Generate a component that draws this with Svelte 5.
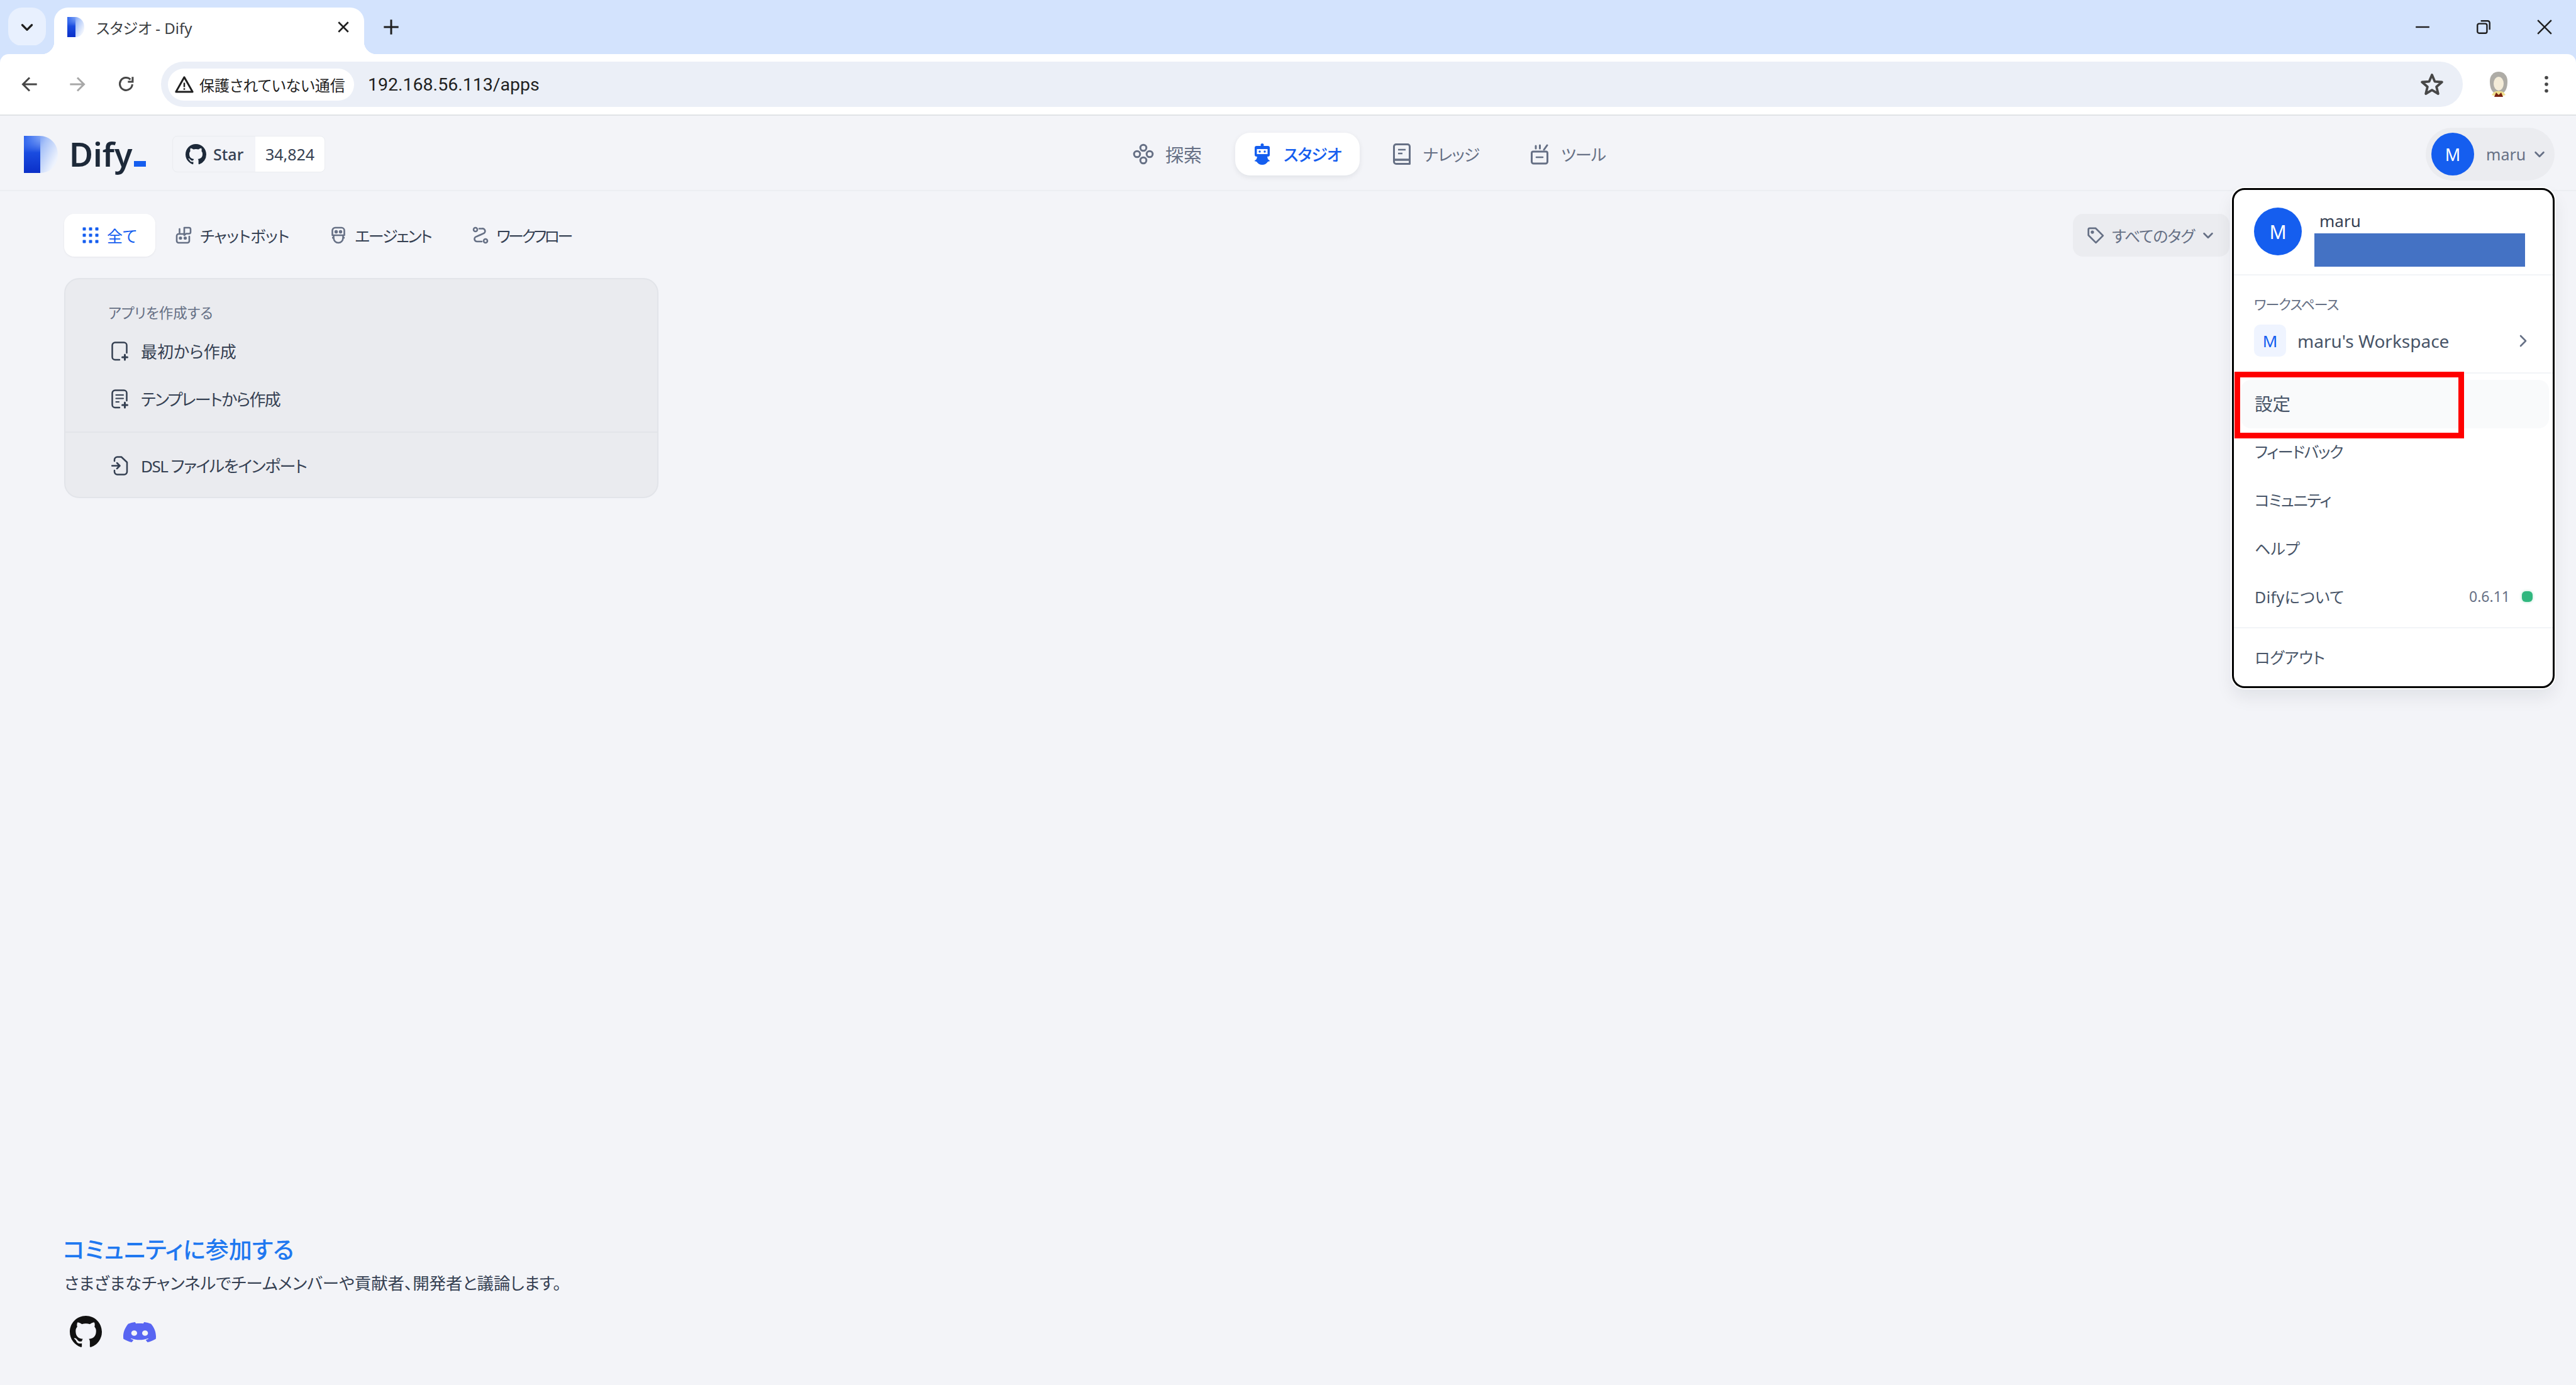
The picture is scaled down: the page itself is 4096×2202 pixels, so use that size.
<script>
  const navItems = [
    { id: 'explore', label: '探索', kanji: true },
    { id: 'studio', label: 'スタジオ', active: true },
    { id: 'knowledge', label: 'ナレッジ' },
    { id: 'tools', label: 'ツール' }
  ];
  const filters = [
    { id: 'all', label: '全て', active: true, track: '0' },
    { id: 'chat', label: 'チャットボット', track: '-0.4px' },
    { id: 'agent', label: 'エージェント', track: '-2.2px' },
    { id: 'workflow', label: 'ワークフロー', track: '-3.5px' }
  ];
  const cardRows = [
    { id: 'blank', label: '最初から作成', track: '0' },
    { id: 'template', label: 'テンプレートから作成', track: '-1.7px' }
  ];
  const menuItems = [
    { label: 'フィードバック', track: '-1.4px' },
    { label: 'コミュニティ', track: '-1.3px' },
    { label: 'ヘルプ', track: '0' },
    { label: 'Difyについて', track: '0.4px', version: '0.6.11' }
  ];
</script>

{#snippet logoMark(id)}
  <svg viewBox="0 0 54 59" preserveAspectRatio="none">
    <defs>
      <linearGradient id="{id}a" x1="0" y1="0" x2="1" y2="0.55">
        <stop offset="0" stop-color="#2a62ee" />
        <stop offset="0.55" stop-color="#a9c3f8" />
        <stop offset="1" stop-color="#eef3fd" />
      </linearGradient>
      <linearGradient id="{id}b" x1="0" y1="0" x2="0" y2="1">
        <stop offset="0" stop-color="#2a62ee" stop-opacity="0" />
        <stop offset="0.45" stop-color="#1a4ce0" />
        <stop offset="1" stop-color="#0a2fc8" />
      </linearGradient>
    </defs>
    <path d="M0 0H24C42 0 54 13 54 30C54 45 44 59 26 59H0Z" fill="url(#{id}a)" />
    <rect width="26" height="59" fill="url(#{id}b)" />
  </svg>
{/snippet}

{#snippet github(size)}
  <svg width={size} height={size} viewBox="0 0 16 16" fill="currentColor">
    <path d="M8 0C3.58 0 0 3.58 0 8c0 3.54 2.29 6.53 5.47 7.59.4.07.55-.17.55-.38 0-.19-.01-.82-.01-1.49-2.01.37-2.53-.49-2.69-.94-.09-.23-.48-.94-.82-1.13-.28-.15-.68-.52-.01-.53.63-.01 1.08.58 1.23.82.72 1.21 1.87.87 2.33.66.07-.52.28-.87.51-1.07-1.78-.2-3.64-.89-3.64-3.95 0-.87.31-1.59.82-2.15-.08-.2-.36-1.02.08-2.12 0 0 .67-.21 2.2.82.64-.18 1.32-.27 2-.27.68 0 1.36.09 2 .27 1.53-1.04 2.2-.82 2.2-.82.44 1.1.16 1.92.08 2.12.51.56.82 1.27.82 2.15 0 3.07-1.87 3.75-3.65 3.95.29.25.54.73.54 1.48 0 1.07-.01 1.93-.01 2.2 0 .21.15.46.55.38A8.013 8.013 0 0016 8c0-4.42-3.58-8-8-8z" />
  </svg>
{/snippet}

{#snippet chevron(size, color)}
  <svg width={size} height={size} viewBox="0 0 24 24" fill="none" stroke={color} stroke-width="3" stroke-linecap="round" stroke-linejoin="round">
    <path d="M5 9l7 7 7-7" />
  </svg>
{/snippet}

{#snippet navIcon(id)}
  {#if id === 'explore'}
    <svg class="nav-icon wide" viewBox="0 0 34 34" fill="none" stroke="#667085" stroke-width="3">
      <circle cx="17" cy="7" r="4.8" /><circle cx="7" cy="17" r="4.8" /><circle cx="27" cy="17" r="4.8" /><circle cx="17" cy="27" r="4.8" />
    </svg>
  {:else if id === 'studio'}
    <svg class="nav-icon" viewBox="0 0 28 34" fill="#155eef">
      <circle cx="14" cy="2.5" r="2.5" />
      <rect x="2" y="4" width="24" height="17" rx="3" />
      <rect x="5.5" y="9" width="17" height="8" fill="#fff" />
      <circle cx="10" cy="13" r="1.7" /><circle cx="18" cy="13" r="1.7" />
      <path d="M6 21H22L23 25L26.5 28L23 29C21 32 18 34 14 34C10 34 7 32 5 29L1.5 28L5 25Z" />
    </svg>
  {:else if id === 'knowledge'}
    <svg class="nav-icon" viewBox="0 0 28 34" fill="none" stroke="#667085" stroke-width="3" stroke-linejoin="round">
      <path d="M5 1.5H23A3.5 3.5 0 0 1 26.5 5V32.5H5A3.5 3.5 0 0 1 1.5 29V5A3.5 3.5 0 0 1 5 1.5Z" />
      <path d="M1.5 26H26.5" stroke-width="3.5" />
      <path d="M8 10H20M8 16H15" stroke-width="2.6" />
    </svg>
  {:else}
    <svg class="nav-icon" viewBox="0 0 28 34" fill="none" stroke="#667085" stroke-width="3" stroke-linecap="round" stroke-linejoin="round">
      <path d="M4 13H24A2.5 2.5 0 0 1 26.5 15.500V29A3 3 0 0 1 23.500 32H4.500A3 3 0 0 1 1.500 29V15.500A2.500 2.500 0 0 1 4 13Z" />
      <path d="M9 22H19" stroke-width="2.6" />
      <path d="M21 10L26 3M8 4V8M14.500 3V8" />
    </svg>
  {/if}
{/snippet}

{#snippet filterIcon(id)}
  {#if id === 'all'}
    <svg class="filter-icon" viewBox="0 0 26 28" fill="#155eef">
      {#each [4, 14, 24] as cy}
        {#each [3, 13, 23] as cx}
          <rect x={cx - 2.500} y={cy - 2.500} width="5" height="5" rx="1" />
        {/each}
      {/each}
    </svg>
  {:else if id === 'chat'}
    <svg class="filter-icon" viewBox="0 0 26 28" fill="none" stroke="#667085" stroke-width="2.600" stroke-linejoin="round" stroke-linecap="round">
      <path d="M14 2H21.500A2.500 2.500 0 0 1 24 4.500V9A2.500 2.500 0 0 1 21.500 11.500H17L14 14Z" />
      <path d="M6.500 4V10" />
      <path d="M13 12H5A3 3 0 0 0 2 15V23A3 3 0 0 0 5 26H19A3 3 0 0 0 22 23V16" />
      <circle cx="8" cy="18.500" r="1.300" fill="#667085" /><circle cx="15.500" cy="18.500" r="1.300" fill="#667085" />
    </svg>
  {:else if id === 'agent'}
    <svg class="filter-icon" viewBox="0 0 24 28" fill="none" stroke="#667085" stroke-width="2.600" stroke-linejoin="round">
      <path d="M7 2H17A4.500 4.500 0 0 1 21.500 6.500V14H2.500V6.500A4.500 4.500 0 0 1 7 2Z" />
      <path d="M4.500 14V18C4.500 23 8 26 12 26C16 26 19.500 23 19.500 18V14" />
      <path d="M2 18H4.500M19.500 18H22" />
      <circle cx="8.500" cy="8.500" r="1.400" fill="#667085" /><circle cx="15.500" cy="8.500" r="1.400" fill="#667085" />
    </svg>
  {:else}
    <svg class="filter-icon" viewBox="0 0 26 28" fill="none" stroke="#667085" stroke-width="2.600" stroke-linecap="round">
      <circle cx="5" cy="5" r="3" /><circle cx="21" cy="23" r="3" />
      <path d="M11 3.500H15.500A4 4 0 0 1 17 11.500L7 16A3.500 3.500 0 0 0 8 24H15" />
    </svg>
  {/if}
{/snippet}

{#snippet cardIcon(id)}
  {#if id === 'import'}
    <svg viewBox="0 0 27 31" fill="none" stroke="#354052" stroke-width="2.500" stroke-linecap="round" stroke-linejoin="round">
      <path d="M5 8V6A4.500 4.500 0 0 1 9.500 1.500H16L25 10V25A4.500 4.500 0 0 1 20.500 29.500H9.500A4.500 4.500 0 0 1 5 25V23" />
      <path d="M1 15.500H13M9 11L13.500 15.500L9 20" />
    </svg>
  {:else}
    <svg viewBox="0 0 27 31" fill="none" stroke="#354052" stroke-width="2.500" stroke-linecap="round">
      <path d="M13 29H6A4.500 4.500 0 0 1 1.500 24.500V6A4.500 4.500 0 0 1 6 1.500H20A4.500 4.500 0 0 1 24.500 6V18" />
      {#if id === 'template'}
        <path d="M7.500 9H19M7.500 14.500H19M7.500 20H12" stroke-width="2.200" />
      {/if}
      <path d="M21.500 21V29M17.500 25H25.500" stroke-width="3" />
    </svg>
  {/if}
{/snippet}

<div class="root">
  <div class="tabstrip">
    <div class="tablist">{@render chevron(26, '#1f1f1f')}</div>
    <div class="tab">
      <span class="favicon">{@render logoMark('fav')}</span>
      <span class="tab-title">スタジオ - Dify</span>
      <svg class="tab-close" viewBox="0 0 20 20" stroke="#1f1f1f" stroke-width="2.400"><path d="M3 3L17 17M17 3L3 17" /></svg>
    </div>
    <svg class="newtab" viewBox="0 0 24 24" stroke="#1f1f1f" stroke-width="2.600"><path d="M12 2V22M2 12H22" /></svg>
    <div class="winctl">
      <svg viewBox="0 0 24 24" stroke="#1f1f1f" stroke-width="2.200"><path d="M2 12H22" /></svg>
      <svg viewBox="0 0 24 24" fill="none" stroke="#1f1f1f" stroke-width="2.200"><rect x="3" y="7" width="14" height="14" rx="2.500" /><path d="M8 3H18A3 3 0 0 1 21 6V16" /></svg>
      <svg viewBox="0 0 24 24" stroke="#1f1f1f" stroke-width="2.200"><path d="M2 2L22 22M22 2L2 22" /></svg>
    </div>
  </div>

  <div class="toolbar">
    <div class="tool">
      <svg viewBox="0 0 24 24" fill="none" stroke="#474747" stroke-width="2.600"><path d="M22 12H4M12 3L3 12L12 21" /></svg>
    </div>
    <div class="tool">
      <svg viewBox="0 0 24 24" fill="none" stroke="#a8a8a8" stroke-width="2.600"><path d="M2 12H20M12 3L21 12L12 21" /></svg>
    </div>
    <div class="tool reload">
      <svg viewBox="0 0 24 24" fill="none" stroke="#474747" stroke-width="2.600"><path d="M20 12A8.500 8.500 0 1 1 17.500 5.500" /><path d="M20.500 2V8.500H14" /></svg>
    </div>
    <div class="omnibox">
      <div class="chip">
        <svg viewBox="0 0 24 24" fill="none" stroke="#1f1f1f" stroke-width="2.400" stroke-linejoin="round"><path d="M12 3L22.500 21.500H1.500Z" /><path d="M12 10V15.500M12 17V19" stroke-width="2" /></svg>
        <span>保護されていない通信</span>
      </div>
      <span class="url">192.168.56.113/apps</span>
      <svg class="star" viewBox="0 0 24 24" fill="none" stroke="#474747" stroke-width="2.400" stroke-linejoin="round">
        <path d="M12 2.500L14.800 9.200L22 9.800L16.500 14.500L18.200 21.500L12 17.800L5.800 21.500L7.500 14.500L2 9.800L9.200 9.200Z" />
      </svg>
    </div>
    <svg class="profile" viewBox="0 0 32 40">
      <path d="M16 0C8 0 2 6 2 15C2 24 4 30 8 33H24C28 30 30 24 30 15C30 6 24 0 16 0Z" fill="#aeaca6" />
      <ellipse cx="16" cy="19" rx="8" ry="11" fill="#f4ecd8" />
      <path d="M8 33C11 30 21 30 24 33L27 37C23 39 9 39 5 37Z" fill="#efe08e" />
      <path d="M9 40L12 33L16 37L20 33L23 40Z" fill="#7a2412" />
    </svg>
    <svg class="kebab" viewBox="0 0 8 32" fill="#474747"><circle cx="4" cy="4" r="3.200" /><circle cx="4" cy="16" r="3.200" /><circle cx="4" cy="28" r="3.200" /></svg>
  </div>

  <div class="page">
    <header class="header">
      <div class="brand">
        <span class="logo">{@render logoMark('logo')}</span>
        <span class="wordmark">Dify<i></i></span>
        <div class="stars">
          <span class="stars-left">{@render github(33)}Star</span>
          <span class="stars-count">34,824</span>
        </div>
      </div>
      <nav class="nav">
        {#each navItems as item}
          <div class="nav-item" class:active={item.active} class:kanji={item.kanji}>
            {@render navIcon(item.id)}
            <span>{item.label}</span>
          </div>
        {/each}
      </nav>
      <div class="user">
        <span class="avatar">M</span>
        <span class="user-name">maru</span>
        {@render chevron(22, '#667085')}
      </div>
    </header>

    <main class="main">
      <div class="filters">
        {#each filters as item}
          <div class="filter" class:active={item.active}>
            {@render filterIcon(item.id)}
            <span style:letter-spacing={item.track}>{item.label}</span>
          </div>
        {/each}
        <div class="tags">
          <svg viewBox="0 0 24 24" fill="none" stroke="#667085" stroke-width="2.200" stroke-linejoin="round"><path d="M3 4.500A1.500 1.500 0 0 1 4.500 3H12L21.500 12.500L12.500 21.500L3 12Z" /><circle cx="8" cy="8" r="1" fill="#667085" /></svg>
          <span>すべてのタグ</span>
          {@render chevron(22, '#667085')}
        </div>
      </div>

      <section class="card">
        <div class="card-top">
          <div class="card-title">アプリを作成する</div>
          {#each cardRows as row}
            <div class="card-row">
              {@render cardIcon(row.id)}
              <span style:letter-spacing={row.track}>{row.label}</span>
            </div>
          {/each}
        </div>
        <div class="card-bottom">
          <div class="card-row">
            {@render cardIcon('import')}
            <span style:letter-spacing="-1.5px">DSL ファイルをインポート</span>
          </div>
        </div>
      </section>

      <footer class="footer">
        <h2>コミュニティに参加する</h2>
        <p>さまざまなチャンネルでチームメンバーや貢献者、開発者と議論します。</p>
        <div class="socials">
          <span class="gh">{@render github(51)}</span>
          <svg class="discord" viewBox="0 0 24 24" fill="#5865f2" preserveAspectRatio="none">
            <path d="M20.317 4.3698a19.7913 19.7913 0 00-4.8851-1.5152.0741.0741 0 00-.0785.0371c-.211.3753-.4447.8648-.6083 1.2495-1.8447-.2762-3.68-.2762-5.4868 0-.1636-.3933-.4058-.8742-.6177-1.2495a.077.077 0 00-.0785-.037 19.7363 19.7363 0 00-4.8852 1.515.0699.0699 0 00-.0321.0277C.5334 9.0458-.319 13.5799.0992 18.0578a.0824.0824 0 00.0312.0561c2.0528 1.5076 4.0413 2.4228 5.9929 3.0294a.0777.0777 0 00.0842-.0276c.4616-.6304.8731-1.2952 1.226-1.9942a.076.076 0 00-.0416-.1057c-.6528-.2476-1.2743-.5495-1.8722-.8923a.077.077 0 01-.0076-.1277c.1258-.0943.2517-.1923.3718-.2914a.0743.0743 0 01.0776-.0105c3.9278 1.7933 8.18 1.7933 12.0614 0a.0739.0739 0 01.0785.0095c.1202.099.246.1981.3728.2924a.077.077 0 01-.0066.1276 12.2986 12.2986 0 01-1.873.8914.0766.0766 0 00-.0407.1067c.3604.698.7719 1.3628 1.225 1.9932a.076.076 0 00.0842.0286c1.961-.6067 3.9495-1.5219 6.0023-3.0294a.077.077 0 00.0313-.0552c.5004-5.177-.8382-9.6739-3.5485-13.6604a.061.061 0 00-.0312-.0286zM8.02 15.3312c-1.1825 0-2.1569-1.0857-2.1569-2.419 0-1.3332.9555-2.4189 2.157-2.4189 1.2108 0 2.1757 1.0952 2.1568 2.419 0 1.3332-.9555 2.4189-2.1569 2.4189zm7.9748 0c-1.1825 0-2.1569-1.0857-2.1569-2.419 0-1.3332.9554-2.4189 2.1569-2.4189 1.2108 0 2.1757 1.0952 2.1568 2.419 0 1.3332-.946 2.4189-2.1568 2.4189Z" />
          </svg>
        </div>
      </footer>
    </main>
  </div>

  <div class="menu">
    <div class="menu-head">
      <span class="avatar large">M</span>
      <div class="menu-id">
        <div class="menu-name">maru</div>
        <div class="redacted"></div>
      </div>
    </div>
    <div class="menu-workspace">
      <div class="menu-label">ワークスペース</div>
      <div class="workspace-row">
        <span class="ws-badge">M</span>
        <span class="ws-name">maru's Workspace</span>
        <svg viewBox="0 0 24 24" fill="none" stroke="#667085" stroke-width="2.600" stroke-linecap="round" stroke-linejoin="round"><path d="M9 4L17 12L9 20" /></svg>
      </div>
    </div>
    <div class="menu-list">
      <div class="menu-item hover kanji">設定</div>
      {#each menuItems as item}
        <div class="menu-item">
          <span style:letter-spacing={item.track}>{item.label}</span>
          {#if item.version}
            <span class="version">{item.version}<i></i></span>
          {/if}
        </div>
      {/each}
    </div>
    <div class="menu-list last">
      <div class="menu-item">ログアウト</div>
    </div>
    <div class="callout"></div>
  </div>
</div>

<style>
  :global(body) {
    margin: 0;
    background: #f3f4f8;
  }

  .root {
    position: relative;
    height: 100vh;
    display: flex;
    flex-direction: column;
    overflow: hidden;
    font-family: "Noto Sans", "Noto Sans CJK JP", sans-serif;
    font-feature-settings: "palt";
    color: #354052;
    background: #f3f4f8;
  }

  /* browser chrome */
  .tabstrip {
    height: 86px;
    flex: none;
    display: flex;
    align-items: flex-start;
    padding: 12px 0 0 13px;
    box-sizing: border-box;
    background: #d3e3fd;
  }

  .tablist {
    width: 60px;
    height: 61px;
    display: flex;
    align-items: center;
    justify-content: center;
    border-radius: 22px;
    background: #e8f0fe;
  }

  .tab {
    position: relative;
    z-index: 1;
    width: 493px;
    height: 74px;
    margin-left: 13px;
    display: flex;
    align-items: center;
    padding: 0 22px 12px 21px;
    box-sizing: border-box;
    border-radius: 22px 22px 0 0;
    background: #fff;
  }

  .tab::before,
  .tab::after {
    content: '';
    position: absolute;
    bottom: 0;
    width: 20px;
    height: 20px;
  }

  .tab::before {
    left: -20px;
    background: radial-gradient(circle at 0 0, transparent 20px, #fff 20.5px);
  }

  .tab::after {
    right: -20px;
    background: radial-gradient(circle at 100% 0, transparent 20px, #fff 20.5px);
  }

  .favicon {
    width: 27px;
    height: 32px;
    display: block;
  }

  .favicon svg,
  .logo svg {
    width: 100%;
    height: 100%;
    display: block;
  }

  .tab-title {
    margin-left: 19px;
    font-size: 24px;
    color: #3c4043;
  }

  .tab-close {
    width: 22px;
    height: 22px;
    margin-left: auto;
  }

  .newtab {
    width: 28px;
    height: 28px;
    margin: 17px 0 0 29px;
  }

  .winctl {
    margin: 18px 0 0 auto;
    padding-right: 37px;
    display: flex;
    gap: 71px;
  }

  .winctl svg {
    width: 26px;
    height: 26px;
  }

  .toolbar {
    height: 98px;
    flex: none;
    display: flex;
    align-items: center;
    padding-left: 9px;
    box-sizing: border-box;
    border-radius: 14px 14px 0 0;
    border-bottom: 2px solid #e1e3e6;
    background: #fff;
    box-shadow: 0 -14px 0 #d3e3fd;
  }

  .tool {
    width: 76px;
    display: flex;
    justify-content: center;
  }

  .tool.reload {
    padding-left: 3px;
    width: 73px;
  }

  .tool svg {
    width: 28px;
    height: 28px;
  }

  .omnibox {
    width: 3660px;
    height: 72px;
    margin-left: 19px;
    display: flex;
    align-items: center;
    padding: 0 30px 0 11px;
    box-sizing: border-box;
    border-radius: 36px;
    background: #ebeff7;
  }

  .chip {
    width: 296px;
    height: 51px;
    display: flex;
    align-items: center;
    gap: 9px;
    padding-left: 11px;
    box-sizing: border-box;
    border-radius: 26px;
    background: #fff;
    font-size: 24px;
    color: #1f1f1f;
  }

  .chip svg {
    width: 30px;
    height: 30px;
    flex: none;
  }

  .url {
    margin-left: 22px;
    font-family: "Roboto", sans-serif;
    font-size: 28.5px;
    color: #1f1f1f;
  }

  .star {
    width: 38px;
    height: 38px;
    margin-left: auto;
  }

  .profile {
    width: 32px;
    height: 40px;
    margin-left: 41px;
  }

  .kebab {
    width: 8px;
    height: 28px;
    margin-left: 56px;
  }

  /* dify header */
  .page {
    flex: 1;
    min-height: 0;
    display: flex;
    flex-direction: column;
  }

  .header {
    height: 120px;
    flex: none;
    display: flex;
    align-items: center;
    padding: 4px 34px 0 38px;
    box-sizing: border-box;
    border-bottom: 2px solid #eceef2;
  }

  .brand {
    width: 1734px;
    display: flex;
    align-items: center;
  }

  .logo {
    width: 54px;
    height: 59px;
  }

  .wordmark {
    width: 125px;
    margin-left: 18px;
    font-family: "Noto Sans", sans-serif;
    font-size: 52px;
    font-weight: 600;
    line-height: 60px;
    color: #1d2939;
    display: flex;
    align-items: flex-end;
  }

  .wordmark i {
    width: 19px;
    height: 9px;
    margin: 0 0 10px 2px;
    background: #155eef;
  }

  .stars {
    height: 56px;
    margin-left: 39px;
    display: flex;
    border: 1px solid #eaecf0;
    border-radius: 8px;
    overflow: hidden;
    font-size: 25px;
    color: #354052;
  }

  .stars-left {
    width: 131px;
    display: flex;
    align-items: center;
    gap: 11px;
    padding-left: 20px;
    box-sizing: border-box;
    font-weight: 500;
  }

  .stars-left :global(svg) {
    color: #1d2939;
  }

  .stars-count {
    width: 110px;
    display: flex;
    align-items: center;
    justify-content: center;
    background: #fff;
  }

  .nav {
    display: flex;
    gap: 24px;
  }

  .nav-item {
    height: 68px;
    display: flex;
    align-items: center;
    gap: 20px;
    padding: 0 29px;
    border-radius: 24px;
    font-size: 26px;
    letter-spacing: -1px;
    color: #667085;
  }

  .nav-item.kanji {
    gap: 18px;
    font-size: 29px;
    letter-spacing: 0;
  }

  .nav-item.active {
    background: #fff;
    color: #155eef;
    font-weight: 500;
    box-shadow: 0 3px 8px rgba(16, 24, 40, 0.08);
  }

  .nav-icon {
    width: 28px;
    height: 34px;
    flex: none;
  }

  .nav-icon.wide {
    width: 34px;
  }

  .user {
    width: 205px;
    height: 84px;
    margin-left: auto;
    display: flex;
    align-items: center;
    padding-left: 9px;
    box-sizing: border-box;
    border-radius: 42px;
    background: #ebecf0;
    font-size: 25px;
    color: #667085;
  }

  .user-name {
    margin: 0 11px 0 19px;
  }

  .avatar {
    width: 68px;
    height: 68px;
    display: flex;
    align-items: center;
    justify-content: center;
    border-radius: 50%;
    background: #155eef;
    color: #fff;
    font-size: 27px;
  }

  .avatar.large {
    width: 76px;
    height: 76px;
    flex: none;
    font-size: 30px;
  }

  /* page body */
  .main {
    flex: 1;
    min-height: 0;
    display: flex;
    flex-direction: column;
    padding: 36px 551px 59px 102px;
  }

  .filters {
    display: flex;
    align-items: center;
    gap: 11px;
    margin-bottom: 34px;
  }

  .filter {
    height: 68px;
    display: flex;
    align-items: center;
    gap: 13px;
    padding: 0 27px;
    border-radius: 16px;
    font-size: 25px;
    color: #354052;
  }

  .filter.active {
    padding: 0 29px;
    margin-right: -6px;
    background: #fff;
    color: #155eef;
    box-shadow: 0 1px 3px rgba(16, 24, 40, 0.06);
  }

  .filter-icon {
    width: 26px;
    height: 28px;
    flex: none;
  }

  .tags {
    height: 68px;
    width: 249px;
    margin-left: auto;
    display: flex;
    align-items: center;
    gap: 11px;
    padding-left: 21px;
    box-sizing: border-box;
    border-radius: 16px;
    background: #ebecf0;
    font-size: 25px;
    letter-spacing: -1px;
    color: #667085;
  }

  .tags > svg:first-child {
    width: 30px;
    height: 30px;
    flex: none;
  }

  .card {
    width: 945px;
    height: 350px;
    box-sizing: border-box;
    border: 2px solid #e2e4e9;
    border-radius: 24px;
    background: #eaebef;
  }

  .card-top {
    padding: 33px 0 14px;
    border-bottom: 2px solid #e2e4e9;
  }

  .card-bottom {
    padding: 14px 0 0;
  }

  .card-title {
    height: 38px;
    margin: 0 0 5px 68px;
    display: flex;
    align-items: center;
    font-size: 22.5px;
    color: #667085;
  }

  .card-row {
    height: 76px;
    display: flex;
    align-items: center;
    gap: 20px;
    padding-left: 73px;
    font-size: 26px;
  }

  .card-row :global(svg) {
    width: 27px;
    height: 31px;
    flex: none;
  }

  .footer {
    margin-top: auto;
  }

  .footer h2 {
    margin: 0 0 0 -2px;
    font-size: 37px;
    font-weight: 500;
    line-height: 40px;
    color: #1f78f0;
  }

  .footer p {
    margin: 17px 0 0 0;
    font-size: 26.4px;
    line-height: 32px;
    color: #354052;
  }

  .socials {
    margin: 36px 0 0 9px;
    display: flex;
    align-items: center;
    gap: 34px;
  }

  .gh {
    display: flex;
    color: #111;
  }

  .discord {
    width: 52px;
    height: 42px;
  }

  /* account dropdown */
  .menu {
    position: absolute;
    top: 299px;
    right: 34px;
    width: 513px;
    height: 795px;
    box-sizing: border-box;
    border: 3px solid #000;
    border-radius: 20px;
    background: #fff;
    box-shadow: 0 0 0 2px #fff, 0 14px 28px rgba(16, 24, 40, 0.08);
  }

  .menu-head {
    height: 136px;
    box-sizing: border-box;
    display: flex;
    padding: 28px 0 0 32px;
    gap: 28px;
    border-bottom: 2px solid #f2f4f7;
  }

  .menu-name {
    height: 38px;
    display: flex;
    align-items: center;
    margin-top: 2px;
    font-size: 26px;
    color: #354052;
  }

  .redacted {
    width: 335px;
    height: 53px;
    margin: 1px 0 0 -8px;
    background: #4472c4;
  }

  .menu-workspace {
    height: 156px;
    box-sizing: border-box;
    padding: 28px 0 0 32px;
    border-bottom: 2px solid #f2f4f7;
  }

  .menu-label {
    height: 32px;
    display: flex;
    align-items: center;
    font-size: 22px;
    letter-spacing: -1px;
    color: #667085;
  }

  .workspace-row {
    height: 51px;
    margin-top: 18px;
    display: flex;
    align-items: center;
    font-size: 28px;
    color: #475467;
  }

  .ws-badge {
    width: 51px;
    height: 51px;
    display: flex;
    align-items: center;
    justify-content: center;
    border-radius: 10px;
    background: #eff4ff;
    color: #155eef;
    font-size: 26px;
  }

  .ws-name {
    margin-left: 18px;
  }

  .workspace-row svg {
    width: 24px;
    height: 24px;
    margin: 0 36px 0 auto;
  }

  .menu-list {
    padding: 10px 6px 8px 11px;
    border-bottom: 2px solid #f2f4f7;
  }

  .menu-list.last {
    border-bottom: 0;
    padding-top: 9px;
  }

  .menu-item {
    height: 77px;
    display: flex;
    align-items: center;
    justify-content: space-between;
    padding: 0 26px 5px 22px;
    box-sizing: border-box;
    border-radius: 16px;
    font-size: 25px;
    color: #475467;
  }

  .menu-item.kanji {
    font-size: 28.5px;
  }

  .menu-item.hover {
    background: #f9fafb;
  }

  .version {
    display: flex;
    align-items: center;
    gap: 19px;
    font-size: 23px;
    color: #667085;
  }

  .version i {
    width: 17px;
    height: 17px;
    border-radius: 6px;
    background: #31b77f;
    box-shadow: 0 0 4px rgba(49, 183, 127, 0.4);
  }

  /* red box drawn over the settings row */
  .callout {
    position: absolute;
    left: 1px;
    top: 289px;
    width: 365px;
    height: 106px;
    box-sizing: border-box;
    border: 9px solid #ff0000;
  }
</style>
